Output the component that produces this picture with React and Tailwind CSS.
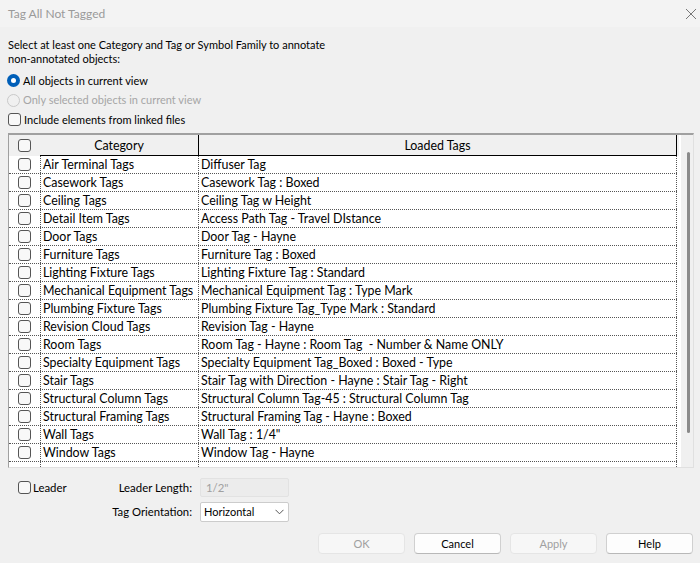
const rows = [
  ['Air Terminal Tags', 'Diffuser Tag'],
  ['Casework Tags', 'Casework Tag : Boxed'],
  ['Ceiling Tags', 'Ceiling Tag w Height'],
  ['Detail Item Tags', 'Access Path Tag - Travel DIstance'],
  ['Door Tags', 'Door Tag - Hayne'],
  ['Furniture Tags', 'Furniture Tag : Boxed'],
  ['Lighting Fixture Tags', 'Lighting Fixture Tag : Standard'],
  ['Mechanical Equipment Tags', 'Mechanical Equipment Tag : Type Mark'],
  ['Plumbing Fixture Tags', 'Plumbing Fixture Tag_Type Mark : Standard'],
  ['Revision Cloud Tags', 'Revision Tag - Hayne'],
  ['Room Tags', 'Room Tag - Hayne : Room Tag  - Number & Name ONLY'],
  ['Specialty Equipment Tags', 'Specialty Equipment Tag_Boxed : Boxed - Type'],
  ['Stair Tags', 'Stair Tag with Direction - Hayne : Stair Tag - Right'],
  ['Structural Column Tags', 'Structural Column Tag-45 : Structural Column Tag'],
  ['Structural Framing Tags', 'Structural Framing Tag - Hayne : Boxed'],
  ['Wall Tags', 'Wall Tag : 1/4"'],
  ['Window Tags', 'Window Tag - Hayne'],
  ['', ''],
]

function Checkbox() {
  return <span className="block w-[13px] h-[13px] rounded-[3px] border border-[#555] bg-[#f8f8f8] shrink-0" />
}

function Button({ label, disabled }) {
  return (
    <button
      className={`w-[87px] h-[21px] rounded-[4px] border text-[11px] leading-none ${
        disabled
          ? 'bg-[#f7f7f7] border-[#e5e5e5] text-[#a0a0a0]'
          : 'bg-[#fdfdfd] border-[#d0d0d0] border-b-[#b8b8b8] text-black'
      }`}
    >
      {label}
    </button>
  )
}

export default function App() {
  return (
    <div className="w-[700px] h-[563px] overflow-hidden bg-[#f0f0f0] text-[11px] leading-[14px] text-black" style={{ fontFamily: 'Lato, "Noto Sans", sans-serif' }}>
      {/* title bar */}
      <div className="h-[27px] bg-[#f3f3f3] flex items-center pl-2 pr-[3px]">
        <span className="text-[#9a9a9a] text-[12px]">Tag All Not Tagged</span>
        <svg className="ml-auto" width="12" height="12" viewBox="0 0 12 12">
          <path d="M1 1 L11 11 M11 1 L1 11" stroke="#777" strokeWidth="1" />
        </svg>
      </div>

      <div className="pl-2 mt-[11px]">
        <p>Select at least one Category and Tag or Symbol Family to annotate</p>
        <p>non-annotated objects:</p>
      </div>

      <div className="pl-[7px] mt-[5px] h-[19px] flex items-center gap-[3px]">
        <span className="w-[13px] h-[13px] rounded-full bg-[#005fb8] flex items-center justify-center">
          <span className="w-[5px] h-[5px] rounded-full bg-white" />
        </span>
        <span>All objects in current view</span>
      </div>
      <div className="pl-[7px] h-[20px] flex items-center gap-[3px] text-[#a6a6a6]">
        <span className="w-[13px] h-[13px] rounded-full border border-[#c9c9c9]" />
        <span>Only selected objects in current view</span>
      </div>
      <div className="pl-2 h-[19px] flex items-center gap-[3px]">
        <Checkbox />
        <span>Include elements from linked files</span>
      </div>

      {/* grid */}
      <div className="ml-2 mt-[4px] w-[686px] h-[335px] flex text-[12.4px] border-t-2 border-l border-t-[#a0a0a0] border-l-[#a0a0a0] border-r border-b border-r-[#e0e0e0] border-b-[#e0e0e0] bg-white">
        <div className="w-[670px] flex flex-col overflow-hidden">
          <div className="h-[21px] shrink-0 flex bg-[#f0f0f0]">
            <div className="w-[31px] flex items-center pl-[9px]">
              <Checkbox />
            </div>
            <div className="w-[159px] border-r border-b border-black flex items-center justify-center pt-[1px]">Category</div>
            <div className="w-[478px] border-r border-b border-black flex items-center justify-center pt-[1px]">Loaded Tags</div>
          </div>
          {rows.map(([cat, tag], i) => (
            <div key={i} className="h-[18px] shrink-0 w-[668px] flex border-b border-dotted border-[#555]">
              <div className="w-[31px] flex items-center pl-[9px]">{cat && <Checkbox />}</div>
              <div className="w-[158px] border-l border-dotted border-[#555] pl-[2px] flex items-center whitespace-pre">{cat}</div>
              <div className="w-[479px] border-l border-r border-dotted border-[#555] pl-[2px] flex items-center whitespace-pre">{tag}</div>
            </div>
          ))}
        </div>
        <div className="flex-1 bg-white">
          <div className="ml-[2px] h-full bg-[#f0f0f0] pt-[17px] pl-[6px]">
            <div className="w-[3px] h-[281px] bg-[#8a8a8a] rounded-full" />
          </div>
        </div>
      </div>

      {/* options */}
      <div className="mt-[10px] h-[19px] flex items-center text-[11.4px]">
        <div className="w-[192px] flex items-center pl-[18px]">
          <Checkbox />
          <span className="ml-[2px]">Leader</span>
          <span className="ml-auto">Leader Length:</span>
        </div>
        <div className="ml-[8px] w-[89px] h-[19px] bg-[#ececec] border border-[#e2e2e2] rounded-[2px] pl-[5px] flex items-center text-[#a0a0a0]">
          1/2"
        </div>
      </div>
      <div className="mt-[5px] h-[20px] flex items-center text-[11.3px]">
        <div className="w-[192px] text-right">Tag Orientation:</div>
        <div className="ml-[8px] w-[89px] h-[20px] bg-white border border-[#cccccc] rounded-[2px] pl-[3px] pr-[4px] flex items-center text-[11px]">
          <span>Horizontal</span>
          <svg className="ml-auto" width="9" height="6" viewBox="0 0 9 6">
            <path d="M0.5 0.8 L4.5 4.8 L8.5 0.8" fill="none" stroke="#555" strokeWidth="1" />
          </svg>
        </div>
      </div>

      <div className="mt-[11px] flex justify-end gap-[9px] pr-[7px]">
        <Button label="OK" disabled />
        <Button label="Cancel" />
        <Button label="Apply" disabled />
        <Button label="Help" />
      </div>
    </div>
  )
}
